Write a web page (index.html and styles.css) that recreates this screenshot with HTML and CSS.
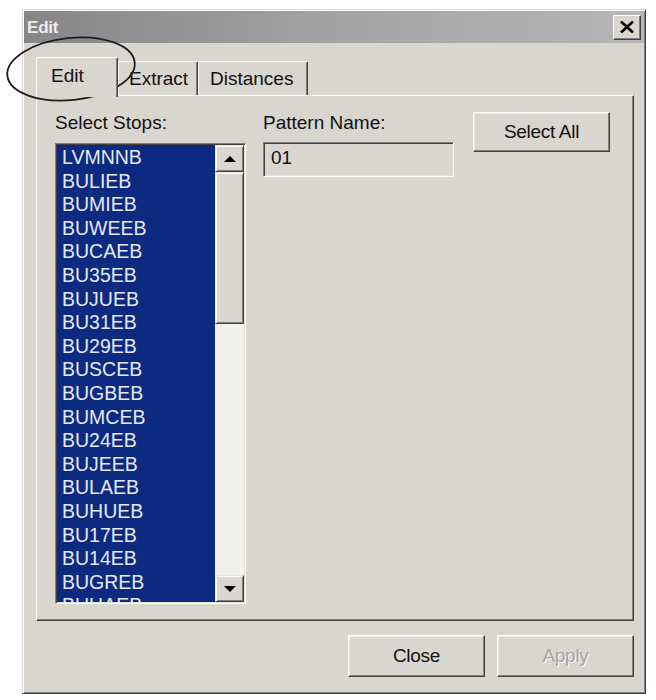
FILE: index.html
```html
<!DOCTYPE html>
<html>
<head>
<meta charset="utf-8">
<link rel="stylesheet" href="styles.css">
</head>
<body>
<div class="page">
  <div class="window">
    <div class="titlebar">
      <span class="title">Edit</span>
      <span class="xbtn"><svg width="14" height="12" viewBox="0 0 14 12"><path d="M1 0.5 L13 11.5 M13 0.5 L1 11.5" stroke="#000" stroke-width="2.6" fill="none"/></svg></span>
    </div>
    <div class="client">
      <div class="tabs">
        <div class="tab active">Edit</div>
        <div class="tab t-extract">Extract</div>
        <div class="tab t-dist">Distances</div>
      </div>
      <div class="panel">
        <div class="col col-list">
          <div class="label lbl-list">Select Stops:</div>
          <div class="listbox">
            <ul class="items">
              <li>LVMNNB</li><li>BULIEB</li><li>BUMIEB</li><li>BUWEEB</li><li>BUCAEB</li>
              <li>BU35EB</li><li>BUJUEB</li><li>BU31EB</li><li>BU29EB</li><li>BUSCEB</li>
              <li>BUGBEB</li><li>BUMCEB</li><li>BU24EB</li><li>BUJEEB</li><li>BULAEB</li>
              <li>BUHUEB</li><li>BU17EB</li><li>BU14EB</li><li>BUGREB</li><li>BUHAEB</li>
            </ul>
            <div class="scrollbar">
              <div class="sbtn"><span class="arrow up"></span></div>
              <div class="thumb"></div>
              <div class="track"></div>
              <div class="sbtn"><span class="arrow down"></span></div>
            </div>
          </div>
        </div>
        <div class="col col-field">
          <div class="label lbl-field">Pattern Name:</div>
          <div class="field">01</div>
        </div>
        <div class="col col-btn">
          <div class="btn btn-select">Select All</div>
        </div>
      </div>
      <div class="footer">
        <div class="btn btn-foot">Close</div>
        <div class="btn btn-foot disabled">Apply</div>
      </div>
    </div>
  </div>
  <svg class="oval" width="160" height="120" viewBox="0 0 160 120">
    <ellipse cx="71" cy="69" rx="64" ry="31" transform="rotate(-6 71 69)" fill="none" stroke="#1c1c1c" stroke-width="1.8"/>
  </svg>
</div>
</body>
</html>
```

FILE: styles.css
```css
html, body {
  margin: 0;
  padding: 0;
  background: #ffffff;
}

body {
  font-family: "Liberation Sans", Arial, sans-serif;
  color: #111;
}

.page {
  position: relative;
  width: 656px;
  height: 700px;
  overflow: hidden;
}

.window {
  box-sizing: border-box;
  margin: 9px 0 0 22px;
  width: 624px;
  height: 685px;
  background: #d9d6cf;
  border: 1px solid;
  border-color: #dedbd5 #404040 #404040 #dedbd5;
  box-shadow: inset 1px 1px #ffffff, inset -1px -1px #808080;
  padding: 1px;
}

.titlebar {
  height: 32px;
  display: flex;
  align-items: center;
  justify-content: space-between;
  padding: 0 3px;
  background: linear-gradient(90deg, #868686 0%, #a3a3a3 50%, #b6b6b6 100%);
}

.title {
  color: #ededed;
  font-weight: bold;
  font-size: 17px;
  letter-spacing: -0.2px;
  padding-top: 2px;
}

.xbtn {
  box-sizing: border-box;
  width: 28px;
  height: 25px;
  display: flex;
  align-items: center;
  justify-content: center;
  background: #d9d6cf;
  border: 1px solid;
  border-color: #ffffff #404040 #404040 #ffffff;
  box-shadow: inset -1px -1px #808080;
}

.client {
  padding: 14px 10px 0 12px;
}

.tabs {
  display: flex;
  align-items: flex-end;
  height: 38px;
}

.tab {
  box-sizing: border-box;
  font-size: 19px;
  line-height: 22px;
  background: #d9d6cf;
  border: 1px solid;
  border-color: #ffffff #404040 transparent #ffffff;
  border-bottom: none;
  border-radius: 2px 2px 0 0;
  box-shadow: inset -1px 0 #808080;
  height: 34px;
  padding: 6px 0 0 10px;
}

.tab.active {
  position: relative;
  z-index: 1;
  width: 82px;
  height: 40px;
  margin-bottom: -2px;
  padding: 7px 0 0 14px;
}

.t-extract {
  width: 80px;
}

.t-dist {
  width: 110px;
  padding-left: 11px;
}

.panel {
  box-sizing: border-box;
  width: 598px;
  height: 526px;
  border: 1px solid;
  border-color: #ffffff #404040 #404040 #ffffff;
  box-shadow: inset -1px -1px #808080;
  padding: 16px 0 0 18px;
  display: flex;
  align-items: flex-start;
}

.col {
  display: flex;
  flex-direction: column;
}

.col-list {
  width: 191px;
}

.col-field {
  width: 191px;
  margin-left: 17px;
}

.col-btn {
  margin-left: 19px;
}

.label {
  font-size: 19px;
  line-height: 22px;
  white-space: nowrap;
}

.lbl-list {
  margin-bottom: 9px;
}

.lbl-field {
  margin-bottom: 8px;
}

.listbox {
  box-sizing: border-box;
  width: 191px;
  height: 461px;
  border: 1px solid;
  border-color: #808080 #ffffff #ffffff #808080;
  box-shadow: inset 1px 1px #404040, inset -1px -1px #e2dfd8;
  padding: 1px;
  display: flex;
}

.items {
  flex: 1;
  margin: 0;
  padding: 1px 0 0 5px;
  list-style: none;
  background: #0b2a80;
  color: #e6e8f4;
  font-size: 19.5px;
  line-height: 23.6px;
  overflow: hidden;
}

.scrollbar {
  width: 29px;
  display: flex;
  flex-direction: column;
  background: #efeee9;
}

.sbtn {
  box-sizing: border-box;
  height: 27px;
  display: flex;
  align-items: center;
  justify-content: center;
  background: #d9d6cf;
  border: 1px solid;
  border-color: #e8e6e0 #404040 #404040 #e8e6e0;
  box-shadow: inset 1px 1px #ffffff, inset -1px -1px #808080;
}

.arrow {
  width: 0;
  height: 0;
  border-left: 6px solid transparent;
  border-right: 6px solid transparent;
}

.arrow.up {
  border-bottom: 6px solid #000;
}

.arrow.down {
  border-top: 6px solid #000;
}

.thumb {
  box-sizing: border-box;
  height: 152px;
  background: #d9d6cf;
  border: 1px solid;
  border-color: #e8e6e0 #404040 #404040 #e8e6e0;
  box-shadow: inset 1px 1px #ffffff, inset -1px -1px #808080;
}

.track {
  flex: 1;
  background: #f1f0eb;
}

.field {
  box-sizing: border-box;
  width: 191px;
  height: 35px;
  border: 1px solid;
  border-color: #808080 #ffffff #ffffff #808080;
  box-shadow: inset 1px 1px #404040, inset -1px -1px #e2dfd8;
  padding: 1px 0 0 7px;
  font-size: 19px;
  line-height: 28px;
  background: #d9d6cf;
}

.btn {
  box-sizing: border-box;
  width: 137px;
  display: flex;
  align-items: center;
  justify-content: center;
  font-size: 19px;
  background: #d9d6cf;
  border: 1px solid;
  border-color: #ffffff #404040 #404040 #ffffff;
  box-shadow: inset -1px -1px #808080, inset 1px 1px #eceae5;
  letter-spacing: -0.3px;
}

.btn-select {
  height: 40px;
}

.footer {
  margin-top: 14px;
  width: 598px;
  display: flex;
  justify-content: flex-end;
  gap: 12px;
}

.btn-foot {
  height: 42px;
}

.btn.disabled {
  color: #a7a49d;
  text-shadow: 1px 1px #ffffff;
}

.oval {
  position: absolute;
  left: 0;
  top: 0;
  pointer-events: none;
}
```
